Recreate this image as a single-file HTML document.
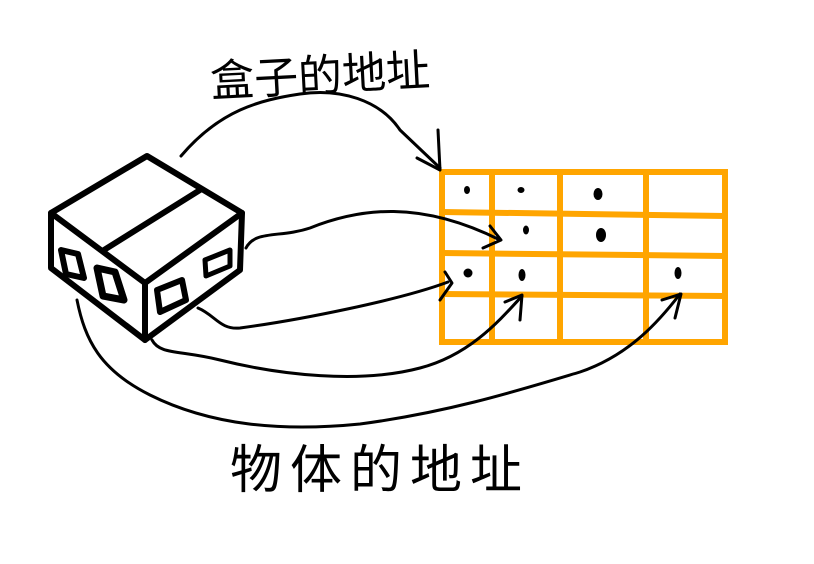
<!DOCTYPE html>
<html><head><meta charset="utf-8"><style>
html,body{margin:0;padding:0;background:#fff;width:814px;height:564px;overflow:hidden}
</style></head><body>
<svg width="814" height="564" viewBox="0 0 814 564" xmlns="http://www.w3.org/2000/svg">
<rect width="814" height="564" fill="#fff"/>
<g stroke="#FFA500" stroke-width="6" fill="none">
<rect x="442" y="172" width="283" height="170"/>
<line x1="492" y1="172" x2="492" y2="342"/>
<line x1="560" y1="172" x2="560" y2="342"/>
<line x1="646" y1="172" x2="646" y2="342"/>
<line x1="442" y1="212" x2="725" y2="216"/>
<line x1="442" y1="253" x2="725" y2="256"/>
<line x1="442" y1="294" x2="725" y2="296"/>
</g>
<g fill="#000">
<ellipse cx="467" cy="190" rx="3" ry="4"/>
<ellipse cx="521" cy="190" rx="3.5" ry="3"/>
<ellipse cx="598" cy="194" rx="4.5" ry="6"/>
<ellipse cx="526" cy="230" rx="3" ry="4.5"/>
<ellipse cx="601" cy="235" rx="5" ry="7"/>
<ellipse cx="468" cy="273" rx="4.5" ry="4.5"/>
<ellipse cx="522" cy="275" rx="3.5" ry="6"/>
<ellipse cx="678" cy="273" rx="3.5" ry="6"/>
</g>
<g stroke="#000" stroke-width="6" fill="none" stroke-linejoin="round" stroke-linecap="round">
<path d="M147,156 L51,213 L51,268 L145,340 L240,270 L242,213 Z"/>
<path d="M51,213 L145,283 L242,213"/>
<path d="M145,283 L145,340"/>
<path d="M200,190 L104,250"/>
<path d="M61,250 L78,254 L84,278 L66,274 Z" stroke-width="6"/>
<path d="M97,268 L115,272 L124,300 L103,296 Z" stroke-width="7"/>
<path d="M157,290 L182,280 L186,300 L160,312 Z" stroke-width="6"/>
<path d="M205,260 L230,250 L230,266 L206,276 Z" stroke-width="5"/>
</g>
<g stroke="#000" stroke-width="3" fill="none" stroke-linecap="round" stroke-linejoin="round">
<path d="M181,156 C220,110 260,100 300,94 C340,88 380,100 400,130 L440,168"/>
<path d="M417,158 L440,170 L438,130"/>
<path d="M246,248 C255,230 280,238 310,228 C360,208 420,200 500,240"/>
<path d="M490,226 L501,240 L483,248"/>
<path d="M198,308 C215,315 220,330 240,328 C300,320 400,300 448,282"/>
<path d="M445,272 L452,283 L440,300"/>
<path d="M152,340 C160,355 180,350 220,360 C280,375 360,384 420,368 C470,355 500,320 522,296"/>
<path d="M505,302 L522,295 L520,320"/>
<path d="M77,300 C85,340 100,370 150,395 C210,425 280,432 360,424 C450,412 520,390 580,372 C630,355 660,320 680,294"/>
<path d="M662,300 L681,294 L675,318"/>
</g>
<text x="210" y="92" font-family="'Liberation Sans','Noto Sans CJK SC',sans-serif" font-size="44" fill="#000" transform="rotate(-3 300 75)">盒子的地址</text>
<text x="230" y="488" font-family="'Liberation Sans','Noto Sans CJK SC',sans-serif" font-size="52" fill="#000" letter-spacing="8">物体的地址</text>
</svg>
</body></html>
